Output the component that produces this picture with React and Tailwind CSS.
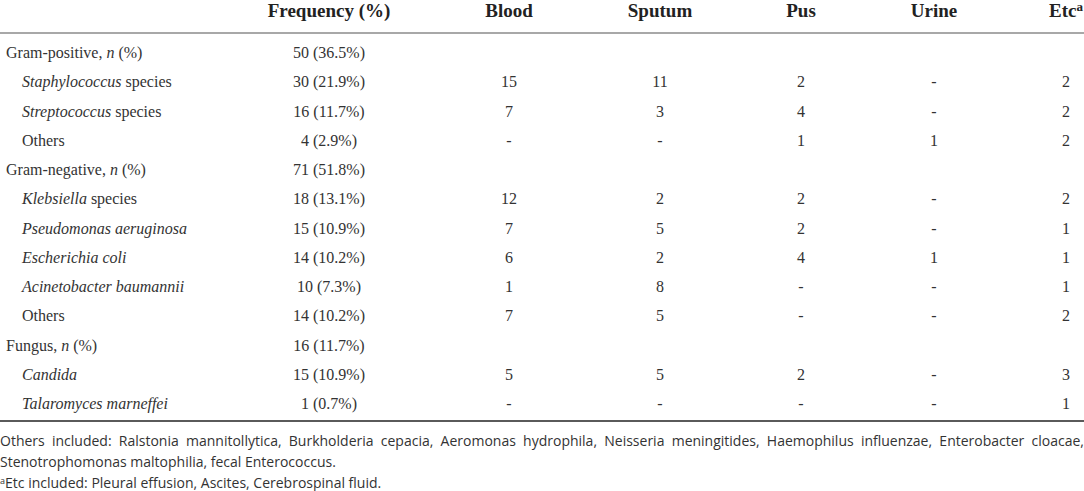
const groups = [
  {
    label: "Gram-positive",
    freq: "50 (36.5%)",
    items: [
      { name: "Staphylococcus", rest: " species", freq: "30 (21.9%)", v: ["15", "11", "2", "-", "2"] },
      { name: "Streptococcus", rest: " species", freq: "16 (11.7%)", v: ["7", "3", "4", "-", "2"] },
      { plain: "Others", freq: "4 (2.9%)", v: ["-", "-", "1", "1", "2"] },
    ],
  },
  {
    label: "Gram-negative",
    freq: "71 (51.8%)",
    items: [
      { name: "Klebsiella", rest: " species", freq: "18 (13.1%)", v: ["12", "2", "2", "-", "2"] },
      { name: "Pseudomonas aeruginosa", freq: "15 (10.9%)", v: ["7", "5", "2", "-", "1"] },
      { name: "Escherichia coli", freq: "14 (10.2%)", v: ["6", "2", "4", "1", "1"] },
      { name: "Acinetobacter baumannii", freq: "10 (7.3%)", v: ["1", "8", "-", "-", "1"] },
      { plain: "Others", freq: "14 (10.2%)", v: ["7", "5", "-", "-", "2"] },
    ],
  },
  {
    label: "Fungus",
    freq: "16 (11.7%)",
    items: [
      { name: "Candida", freq: "15 (10.9%)", v: ["5", "5", "2", "-", "3"] },
      { name: "Talaromyces marneffei", freq: "1 (0.7%)", v: ["-", "-", "-", "-", "1"] },
    ],
  },
];

// per-column padding nudges the centred text onto the reference columns
const pads = ["pl-[13px]", "pl-[4px]", "pl-[3px]", "", "pl-[48px]"];

export default function App() {
  const rows = [];
  groups.forEach((g) => {
    rows.push({ group: true, ...g });
    g.items.forEach((it) => rows.push(it));
  });

  return (
    <div className="w-[1084px] h-[491px] bg-white text-[#333] overflow-hidden">
      <div className="border-b-2 border-[#5a5a5a] pb-[2px] font-['Liberation_Serif',serif]">
        <table className="w-[1084px] table-fixed border-collapse">
          <colgroup>
            <col className="w-[250px]" />
            <col className="w-[170px]" />
            <col className="w-[165px]" />
            <col className="w-[146px]" />
            <col className="w-[137px]" />
            <col className="w-[132px]" />
            <col className="w-[84px]" />
          </colgroup>

          {/* HEADER */}
          <thead>
            <tr className="border-b-2 border-[#a8a8a8] text-[19px] font-bold text-[#222]">
              <th className="p-0 pb-[10px] leading-[22px]"></th>
              <th className="p-0 pb-[10px] pr-[12px] leading-[22px] text-center">Frequency (%)</th>
              <th className="p-0 pb-[10px] pl-[13px] leading-[22px] text-center">Blood</th>
              <th className="p-0 pb-[10px] pl-[4px] leading-[22px] text-center">Sputum</th>
              <th className="p-0 pb-[10px] pl-[3px] leading-[22px] text-center">Pus</th>
              <th className="p-0 pb-[10px] leading-[22px] text-center">Urine</th>
              <th className="p-0 pb-[10px] pl-[48px] leading-[22px] text-center whitespace-nowrap">
                Etc<sup className="text-[13px] font-bold">a</sup>
              </th>
            </tr>
          </thead>

          {/* BODY */}
          <tbody className="text-[16px]">
            <tr>
              <td colSpan={7} className="p-0 h-[5px]"></td>
            </tr>
            {rows.map((r, i) => (
              <tr key={i} className="leading-[29.25px]">
                <td className={r.group ? "p-0 pl-[6px] whitespace-nowrap" : "p-0 pl-[22px] whitespace-nowrap"}>
                  {r.group ? (
                    <>
                      {r.label}, <i>n</i> (%)
                    </>
                  ) : r.plain ? (
                    r.plain
                  ) : (
                    <>
                      <i>{r.name}</i>
                      {r.rest}
                    </>
                  )}
                </td>
                <td className="p-0 pr-[12px] text-center whitespace-nowrap">{r.freq}</td>
                {r.group
                  ? pads.map((p, j) => <td key={j} className="p-0"></td>)
                  : r.v.map((val, j) => (
                      <td key={j} className={`p-0 text-center ${pads[j]}`}>
                        {val}
                      </td>
                    ))}
              </tr>
            ))}
          </tbody>
        </table>
      </div>

      {/* FOOTNOTES */}
      <div className="pt-[8px] font-['Open_Sans',sans-serif] text-[14px] leading-[21px] text-[#333]">
        <p className="text-justify">
          Others included: Ralstonia mannitollytica, Burkholderia cepacia, Aeromonas hydrophila, Neisseria
          meningitides, Haemophilus influenzae, Enterobacter cloacae, Stenotrophomonas maltophilia, fecal
          Enterococcus.
        </p>
        <p>
          <sup className="text-[9px]">a</sup>Etc included: Pleural effusion, Ascites, Cerebrospinal fluid.
        </p>
      </div>
    </div>
  );
}
